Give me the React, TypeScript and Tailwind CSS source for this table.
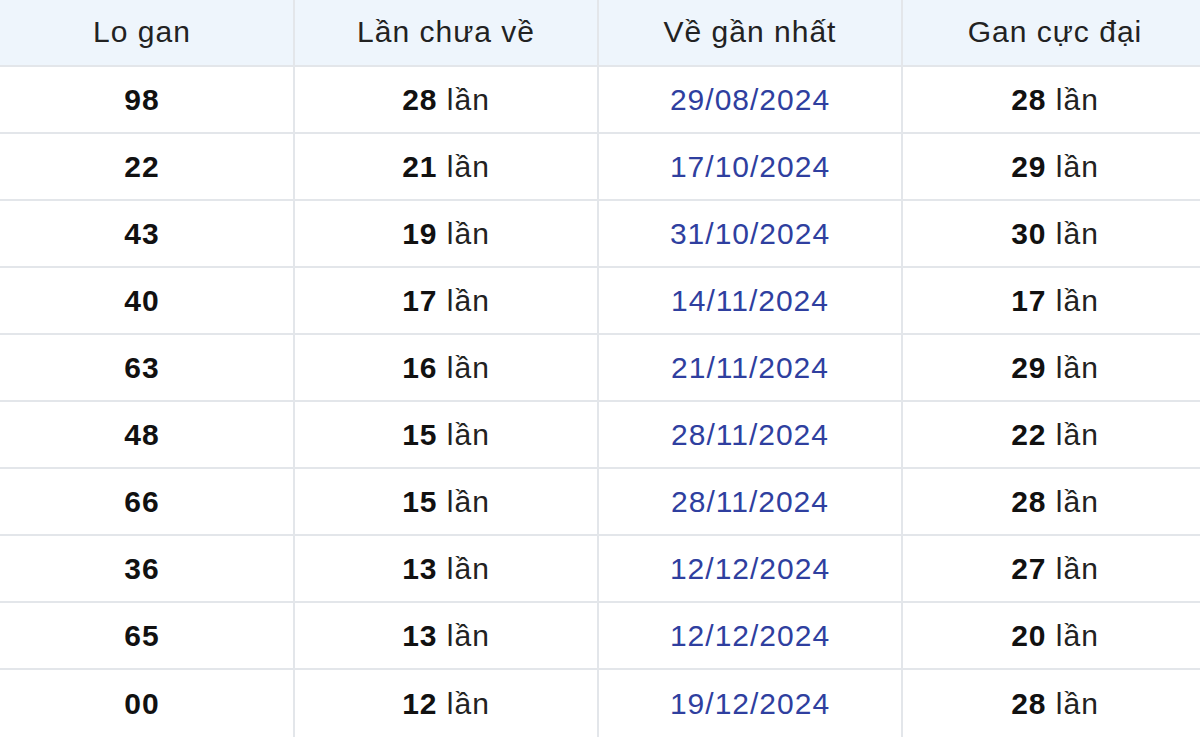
import React from "react";

const rows: [string, string, string, string][] = [
  ["98", "28", "29/08/2024", "28"],
  ["22", "21", "17/10/2024", "29"],
  ["43", "19", "31/10/2024", "30"],
  ["40", "17", "14/11/2024", "17"],
  ["63", "16", "21/11/2024", "29"],
  ["48", "15", "28/11/2024", "22"],
  ["66", "15", "28/11/2024", "28"],
  ["36", "13", "12/12/2024", "27"],
  ["65", "13", "12/12/2024", "20"],
  ["00", "12", "19/12/2024", "28"],
];

const headers = ["Lo gan", "Lần chưa về", "Về gần nhất", "Gan cực đại"];

export default function App() {
  return (
    <div
      className="w-[1200px] h-[744px] overflow-hidden bg-white"
      style={{ fontFamily: '"Liberation Sans", Arial, sans-serif' }}
    >
      <div className="ml-[-9px] w-[1216px] grid grid-cols-[repeat(4,304px)] text-[30px] tracking-[1px] text-[#222]">
        {headers.map((h, i) => (
          <div
            key={h}
            className={`h-[67px] pb-[2px] flex items-center justify-center bg-[#eef5fc] border-b-2 border-[#e3e6ea] ${
              i < 3 ? "border-r-2" : ""
            }`}
          >
            {h}
          </div>
        ))}
        {rows.map((r, ri) =>
          [0, 1, 2, 3].map((ci) => (
            <div
              key={`${ri}-${ci}`}
              className={`h-[67px] flex items-center justify-center border-[#e3e6ea] ${
                ri < rows.length - 1 ? "border-b-2" : ""
              } ${ci < 3 ? "border-r-2" : ""}`}
            >
              {ci === 0 && <span className="font-bold text-[#111]">{r[0]}</span>}
              {ci === 1 && (
                <span>
                  <span className="font-bold text-[#111]">{r[1]}</span> lần
                </span>
              )}
              {ci === 2 && <span className="text-[#2f3f9f]">{r[2]}</span>}
              {ci === 3 && (
                <span>
                  <span className="font-bold text-[#111]">{r[3]}</span> lần
                </span>
              )}
            </div>
          ))
        )}
      </div>
    </div>
  );
}
